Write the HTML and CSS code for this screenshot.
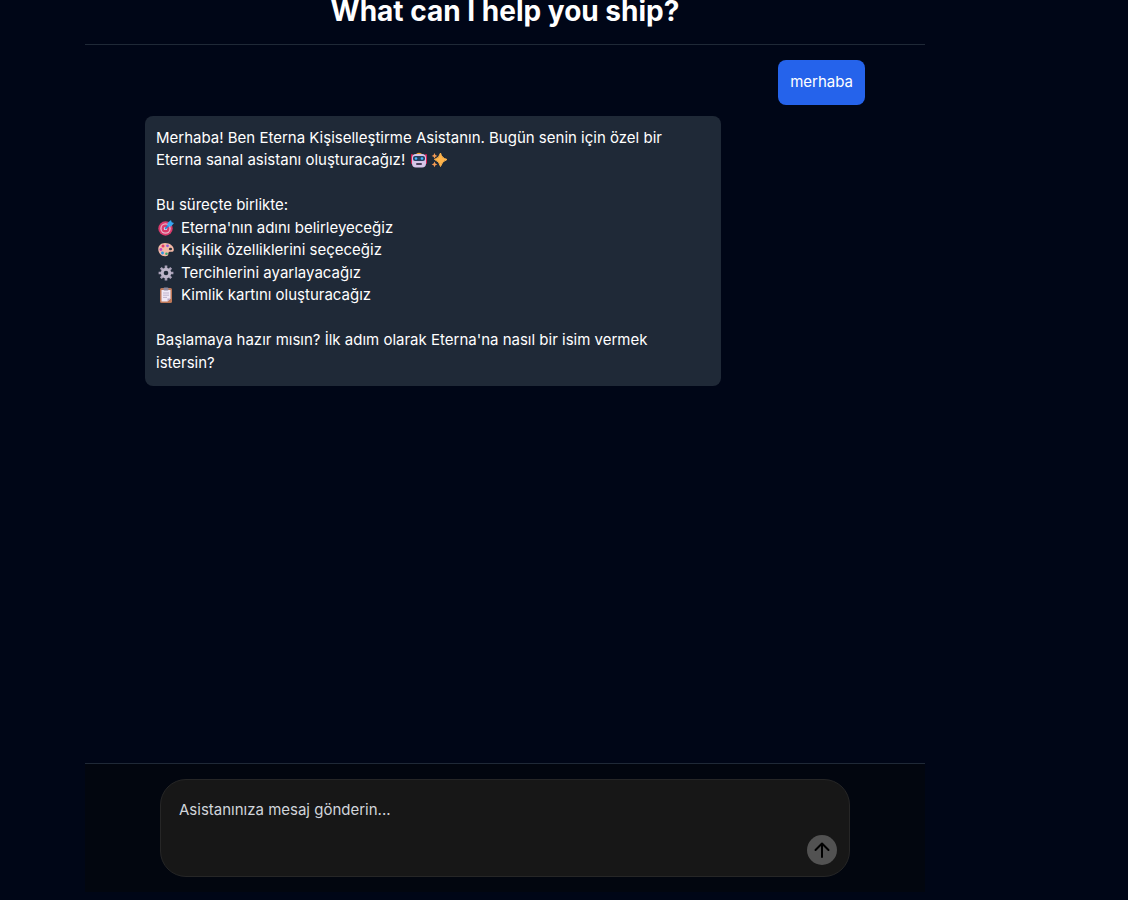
FILE: index.html
```html
<!DOCTYPE html>
<html lang="tr">
<head>
<meta charset="utf-8">
<meta name="viewport" content="width=device-width, initial-scale=1">
<title>Eterna</title>
<link rel="stylesheet" href="styles.css">
</head>
<body>
<main class="chat">
  <h1 class="chat-title">What can I help you ship?</h1>
  <section class="messages">
    <div class="bubble bubble-user">merhaba</div>
    <div class="bubble bubble-assistant">
      <p>Merhaba! Ben Eterna Kişiselleştirme Asistanın. Bugün senin için özel bir Eterna sanal asistanı oluşturacağız!
        <svg class="emoji" viewBox="0 0 16 16" role="img" aria-label="Robot"><rect x="0" y="2" width="2" height="10" rx="1" fill="#d51f55"/><rect x="14" y="2" width="2" height="10" rx="1" fill="#d51f55"/><path d="M4 3Q8-1.500 12 3z" fill="#f3a62c"/><rect x="1" y="2" width="14" height="13.500" rx="4" fill="#d5c4e7"/><rect x="2" y="4" width="12" height="5" rx="2" fill="#27415f"/><circle cx="5" cy="6.500" r="1.300" fill="#45b8ff"/><circle cx="11" cy="6.500" r="1.300" fill="#45b8ff"/><rect x="5" y="11" width="6" height="2" rx="1" fill="#493e59"/></svg><svg class="emoji emoji-next" viewBox="0 0 16 16" role="img" aria-label="Parıltı"><path d="M9.500 1Q10.500 6 16 7.500 11 9 9.500 14.500 8.500 9 3.500 7.500 8.500 6 9.500 1z" fill="#ffb44b" stroke="#ffb44b" stroke-linejoin="round"/><path d="m3.500 1 .9 2 2 .9-2 .9-.9 2-.9-2-2-.9 2-.9zM3.500 9.500l.9 2 2 .9-2 .9-.9 2-.9-2-2-.9 2-.9z" fill="#f49a54"/></svg></p>
      <p class="paragraph">Bu süreçte birlikte:</p>
      <ul class="steps">
        <li><svg class="emoji" viewBox="0 0 16 16" aria-hidden="true"><circle cx="7.500" cy="8.500" r="7.200" fill="#d93a6c"/><circle cx="7.500" cy="8.500" r="5.200" fill="#e8b5c8"/><circle cx="7.500" cy="8.500" r="3.900" fill="#d93a6c"/><circle cx="7.500" cy="8.500" r="1.600" fill="#fff"/><path d="m7 9 5-5" stroke="#277ed0" stroke-width="1.800"/><path d="M9.500 6.500V3L13 0l.7 2.300 2.300.7-3 3.500z" fill="#35a8f3"/></svg>Eterna'nın adını belirleyeceğiz</li>
        <li><svg class="emoji" viewBox="0 0 16 16" aria-hidden="true"><path d="M7 1C2 1-.5 5 .5 9s5 6 8 5c3-.8 1-3 2.500-4 1.500-.8 4.500.8 4.800-2C16 4 12 1 7 1z" fill="#f3b8a6"/><circle cx="5" cy="4" r="1.500" fill="#e23b67"/><circle cx="9.500" cy="3.800" r="1.400" fill="#8c5bd7"/><circle cx="2.900" cy="7.500" r="1.400" fill="#c345c4"/><circle cx="4.500" cy="11" r="1.400" fill="#2894e5"/><circle cx="8.500" cy="11.800" r="1.300" fill="#38a970"/><ellipse cx="12.500" cy="7" rx="1.600" ry="1.300" fill="#303640"/></svg>Kişilik özelliklerini seçeceğiz</li>
        <li><svg class="emoji" viewBox="0 0 16 16" aria-hidden="true"><g stroke="#aaa2b9" stroke-width="2.600"><path d="M8 .6v14.800M.6 8h14.800M2.800 2.800l10.400 10.400M13.200 2.800 2.800 13.200"/></g><circle cx="8" cy="8" r="5.200" fill="#bcb5c9"/><circle cx="8" cy="8" r="2.300" fill="#1f2937"/></svg>Tercihlerini ayarlayacağız</li>
        <li><svg class="emoji" viewBox="0 0 16 16" aria-hidden="true"><rect x="2" y="1" width="12" height="15" rx="1.500" fill="#bd7757"/><path d="M3.500 3h9v8.500l-3 3h-6z" fill="#f0e8f5"/><path d="m9.500 14.500v-3h3z" fill="#b9a9c9"/><rect x="5.500" y=".5" width="5" height="3" rx="1" fill="#8f899e"/><path d="M5 6h6M5 8.200h6M5 10.400h4" stroke="#b1a5bf" stroke-width=".8"/></svg>Kimlik kartını oluşturacağız</li>
      </ul>
      <p class="paragraph">Başlamaya hazır mısın? İlk adım olarak Eterna'na nasıl bir isim vermek istersin?</p>
    </div>
  </section>
  <form class="composer">
    <div class="composer-box">
      <textarea class="composer-input" aria-label="Mesaj" placeholder="Asistanınıza mesaj gönderin..."></textarea>
      <button class="send" type="button" aria-label="Gönder"><svg viewBox="0 0 20 20" aria-hidden="true"><path d="M10 17V3.500M3.500 10 10 3.500l6.500 6.500"/></svg></button>
    </div>
  </form>
</main>
</body>
</html>
```
FILE: styles.css
```css
* { box-sizing: border-box; }
body {
  margin: 0;
  padding-right: 118px;
  background: #000617;
  color: #fff;
  font: 15px/1.5 Inter, sans-serif;
}
.chat {
  display: flex;
  flex-direction: column;
  max-width: 840px;
  height: 100vh;
  margin: 0 auto;
  padding-bottom: 8px;
}
.chat-title {
  margin: 0 0 22px;
  font-size: 28px;
  font-weight: 700;
  line-height: 22px;
  text-align: center;
}
.messages {
  display: flex;
  flex: 1;
  flex-direction: column;
  gap: 11px;
  min-height: 0;
  padding: 15px 60px;
  border-top: 1px solid #1f2937;
}
.bubble { padding: 11px 11px 12px; border-radius: 8px; }
.bubble-user { align-self: flex-end; padding: 11px 12px; background: #2563eb; }
.bubble-assistant { width: 80%; background: #1f2937; }
.bubble p { margin: 0; }
.bubble .paragraph { margin-top: 1.5em; }
.steps { margin: 0; padding: 0; list-style: none; }
.steps .emoji { margin: 0 7px 0 2px; }
.emoji { width: 16px; height: 16px; margin-left: 2px; vertical-align: -3px; }
.emoji-next { margin-left: 4px; }
.composer {
  padding: 15px 75px;
  border-top: 1px solid #1f2937;
  background: #02060f;
}
.composer-box {
  display: flex;
  align-items: flex-end;
  padding: 13px 12px 11px;
  border: 1px solid #262626;
  border-radius: 26px;
  background: #171717;
}
.composer-input {
  flex: 1;
  height: 72px;
  padding: 6px;
  border: 0;
  outline: 0;
  background: transparent;
  color: inherit;
  font: inherit;
  resize: none;
}
.composer-input::placeholder { color: #d1d5db; opacity: 1; }
.send {
  display: grid;
  place-items: center;
  width: 30px;
  height: 30px;
  padding: 0;
  border: 0;
  border-radius: 50%;
  background: #525252;
  color: #000;
}
.send svg {
  width: 20px;
  height: 20px;
  fill: none;
  stroke: currentColor;
  stroke-width: 2;
  stroke-linecap: round;
  stroke-linejoin: round;
}
```
